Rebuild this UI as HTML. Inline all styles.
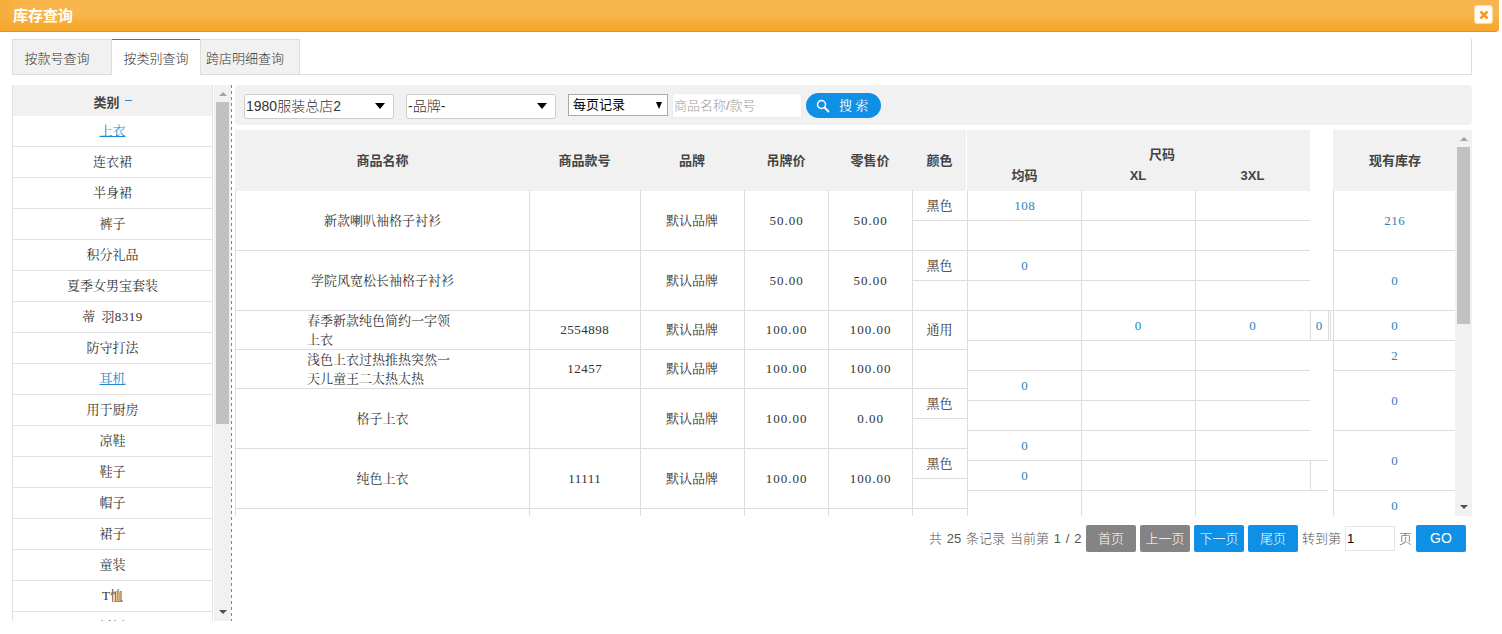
<!DOCTYPE html>
<html lang="zh-CN">
<head>
<meta charset="utf-8">
<title>库存查询</title>
<style>
*{box-sizing:border-box;margin:0;padding:0}
html,body{width:1502px;height:634px;overflow:hidden;background:#fff}
body{position:relative;font-family:"Liberation Sans","Noto Sans CJK SC",sans-serif;font-size:13px;color:#333}
.abs{position:absolute}
/* title bar */
#bar{position:absolute;left:0;top:0;width:1499px;height:32px;background:linear-gradient(#f7b54c 0%,#f7b54b 52%,#f6ad38 72%,#f6a62b 100%);border-bottom:1px solid #e3961f;border-radius:0 0 4px 0;overflow:hidden}
#bar .gloss{position:absolute;left:0;top:0;width:26px;height:31px;background:linear-gradient(to right,rgba(246,166,43,.55),rgba(246,166,43,0))}
#title{position:absolute;left:13px;top:6px;font-size:15px;line-height:20px;font-weight:bold;color:#fff;letter-spacing:0}
#close{position:absolute;left:1474px;top:5px;width:19px;height:19px;border-radius:3px;background:#fefbf6;border:1px solid #f9d9a4}
#close svg{position:absolute;left:3.5px;top:4px}
/* tabs */
#tabs{position:absolute;left:12px;top:39px;width:1460px;height:36px;border-right:1px solid #ddd;border-bottom:1px solid #ddd}
.tab{position:absolute;top:0;height:36px;background:#f1f1f1;border:1px solid #ddd;font-weight:300;font-size:13px;line-height:37px;text-align:center;color:#333;font-family:"Liberation Sans","Noto Sans CJK SC",sans-serif}
.tab.on{background:#fff;border-top:1px solid #337ab7;border-bottom:0;height:37px;line-height:37px;border-left:0;border-right:0}
/* left list */
#left{position:absolute;left:12px;top:85px;width:201px;height:536px;overflow:hidden;border-left:1px solid #e2e2e2;border-right:1px solid #e2e2e2}
#left .h{height:31px;background:#f1f1f1;text-align:center;line-height:36px;font-weight:bold;font-size:13px;color:#444;margin:0 -1px}
#left .h span{display:inline-block;width:7px;height:1px;background:#2a8dd4;margin-left:5px;position:relative;top:-6px}
#left .r{height:31px;border-bottom:1px solid #e2e2e2;text-align:center;line-height:29px;font-family:"Liberation Serif","Noto Serif CJK SC",serif;font-size:13px;color:#333}
#left .r a{color:#1e88d2;text-decoration:underline}
/* scrollbars */
.sb{position:absolute;background:#f1f1f1}
.sb .th{position:absolute;background:#c1c1c1}
.sb .up,.sb .dn{position:absolute;left:50%;width:0;height:0;border-left:4px solid transparent;border-right:4px solid transparent;margin-left:-4px}
.sb .up{border-bottom:4px solid #a3a3a3}
.sb .dn{border-top:4px solid #505050}
#dash{position:absolute;left:231px;top:85px;width:1px;height:536px;background:repeating-linear-gradient(to bottom,#858585 0,#858585 3px,transparent 3px,transparent 6px)}
/* filter */
#filter{position:absolute;left:235px;top:85px;width:1237px;height:40px;background:#f1f1f1;border-radius:4px}
.sel{position:absolute;font-weight:300;background:#fff;border:1px solid #ccc;border-radius:3px;font-size:14px;line-height:22px;color:#333;white-space:nowrap}
.sel i{position:absolute;right:8px;top:8px;width:0;height:0;border-left:5px solid transparent;border-right:5px solid transparent;border-top:6px solid #000}
/* table */
.hd{position:absolute;background:#f1f1f1}
.ht{position:absolute;font-weight:bold;font-size:13px;color:#444;text-align:center;line-height:16px;white-space:nowrap}
.vl{position:absolute;width:1px;background:#ddd}
.hl{position:absolute;height:1px;background:#ddd}
.n{letter-spacing:1px;padding-left:1px}
.k{letter-spacing:.5px;padding-left:.5px}
.c{position:absolute;margin-top:1px;text-align:center;font-family:"Liberation Serif","Noto Serif CJK SC",serif;font-size:13px;line-height:20px;color:#333;white-space:nowrap}
.b{color:#2f7fc0}
/* pager */
#pg{font-weight:300;position:absolute;top:525px;left:0;height:27px;font-size:13px;line-height:27px;color:#555}
.btn{font-weight:300;position:absolute;top:525px;height:27px;width:50px;border-radius:2px;color:#fff;text-align:center;font-size:13px;line-height:27px;background:#0e90e6}
.btn.g{background:#848484}
</style>
</head>
<body>
<div id="bar"><div class="gloss"></div><div id="title">库存查询</div></div>
<div id="close"><svg width="10" height="10" viewBox="0 0 10 10"><path d="M1.5 1.5L8.5 8.5M8.5 1.5L1.5 8.5" stroke="#f39a1f" stroke-width="2.6" stroke-linecap="butt"/></svg></div>

<div id="tabs">
  <div class="tab" style="left:0;width:100px;padding-right:10px">按款号查询</div>
  <div class="tab on" style="left:100px;width:88px">按类别查询</div>
  <div class="tab" style="left:188px;width:100px;padding-right:10px">跨店明细查询</div>
</div>

<div id="left">
  <div class="h">类别<span></span></div>
  <div class="r"><a>上衣</a></div>
  <div class="r">连衣裙</div>
  <div class="r">半身裙</div>
  <div class="r">裤子</div>
  <div class="r">积分礼品</div>
  <div class="r">夏季女男宝套装</div>
  <div class="r" style="word-spacing:3px">蒂 羽<span class="k" style="padding:0">8319</span></div>
  <div class="r">防守打法</div>
  <div class="r"><a>耳机</a></div>
  <div class="r">用于厨房</div>
  <div class="r">凉鞋</div>
  <div class="r">鞋子</div>
  <div class="r">帽子</div>
  <div class="r">裙子</div>
  <div class="r">童装</div>
  <div class="r">T恤</div>
  <div class="r">衬衫</div>
</div>
<div class="sb" style="left:214px;top:85px;width:17px;height:536px">
  <div class="up" style="top:7px"></div>
  <div class="th" style="left:2px;top:17px;width:13px;height:322px"></div>
  <div class="dn" style="bottom:7px"></div>
</div>
<div id="dash"></div>

<div id="filter">
  <div class="sel" style="left:9px;top:9px;width:150px;height:25px;padding-left:1px">1980服装总店2<i></i></div>
  <div class="sel" style="left:171px;top:9px;width:150px;height:25px;padding-left:1px">-品牌-<i></i></div>
  <div class="sel" style="left:333px;top:9px;width:100px;height:22px;border-radius:0;border-color:#a9a9a9;line-height:20px;font-size:13px;font-weight:400;color:#000;padding-left:4px">每页记录<i style="right:5px;top:7px;border-left-width:3.5px;border-right-width:3.5px;border-top-width:7px"></i></div>
  <div class="sel" style="left:437px;top:8px;width:130px;height:25px;border-color:#ececec;border-radius:2px;color:#9d9d9d;font-size:13px;padding-left:1px;line-height:23px">商品名称/款号</div>
  <div class="abs" style="left:571px;top:8px;width:75px;height:25px;border-radius:13px;background:#0e90e6;color:#fff;font-size:13px;line-height:25px;padding-left:33px;white-space:nowrap;font-family:'Liberation Serif','Noto Serif CJK SC',serif">搜 索
    <svg class="abs" style="left:10px;top:6px" width="14" height="14" viewBox="0 0 14 14"><circle cx="5.5" cy="5.5" r="4" fill="none" stroke="#fff" stroke-width="1.4"/><path d="M8.5 8.5L12.5 12.5" stroke="#fff" stroke-width="1.8" stroke-linecap="round"/></svg>
  </div>
</div>

<!--GRID--><div id="grid" style="position:absolute;left:0;top:0;width:1502px;height:516px;overflow:hidden">
<div class="hd" style="left:235px;top:130px;width:731px;height:61px"></div>
<div class="hd" style="left:967px;top:130px;width:343px;height:61px"></div>
<div class="hd" style="left:1333px;top:130px;width:123px;height:61px"></div>
<div class="ht" style="left:236px;top:153px;width:293px">商品名称</div>
<div class="ht" style="left:529px;top:153px;width:111px">商品款号</div>
<div class="ht" style="left:640px;top:153px;width:104px">品牌</div>
<div class="ht" style="left:744px;top:153px;width:84px">吊牌价</div>
<div class="ht" style="left:828px;top:153px;width:84px">零售价</div>
<div class="ht" style="left:912px;top:153px;width:55px">颜色</div>
<div class="ht" style="left:1062px;top:147px;width:200px">尺码</div>
<div class="ht" style="left:968px;top:168px;width:113px">均码</div>
<div class="ht" style="left:1081px;top:168px;width:114px">XL</div>
<div class="ht" style="left:1195px;top:168px;width:115px">3XL</div>
<div class="ht" style="left:1334px;top:153px;width:122px">现有库存</div>
<div class="vl" style="left:235px;top:190px;height:326px"></div>
<div class="vl" style="left:529px;top:190px;height:326px"></div>
<div class="vl" style="left:640px;top:190px;height:326px"></div>
<div class="vl" style="left:744px;top:190px;height:326px"></div>
<div class="vl" style="left:828px;top:190px;height:326px"></div>
<div class="vl" style="left:912px;top:190px;height:326px"></div>
<div class="hl" style="left:235px;top:250px;width:677px"></div>
<div class="hl" style="left:235px;top:310px;width:677px"></div>
<div class="hl" style="left:235px;top:349px;width:677px"></div>
<div class="hl" style="left:235px;top:388px;width:677px"></div>
<div class="hl" style="left:235px;top:448px;width:677px"></div>
<div class="hl" style="left:235px;top:508px;width:677px"></div>
<div class="hl" style="left:912px;top:220px;width:55px"></div>
<div class="hl" style="left:912px;top:250px;width:55px"></div>
<div class="hl" style="left:912px;top:280px;width:55px"></div>
<div class="hl" style="left:912px;top:310px;width:55px"></div>
<div class="hl" style="left:912px;top:349px;width:55px"></div>
<div class="hl" style="left:912px;top:388px;width:55px"></div>
<div class="hl" style="left:912px;top:418px;width:55px"></div>
<div class="hl" style="left:912px;top:448px;width:55px"></div>
<div class="hl" style="left:912px;top:478px;width:55px"></div>
<div class="hl" style="left:912px;top:508px;width:55px"></div>
<div class="vl" style="left:967px;top:190px;height:326px"></div>
<div class="vl" style="left:1081px;top:190px;height:326px"></div>
<div class="vl" style="left:1195px;top:190px;height:326px"></div>
<div class="hl" style="left:968px;top:220px;width:342px"></div>
<div class="hl" style="left:968px;top:250px;width:342px"></div>
<div class="hl" style="left:968px;top:280px;width:342px"></div>
<div class="hl" style="left:968px;top:310px;width:366px"></div>
<div class="hl" style="left:968px;top:340px;width:366px"></div>
<div class="hl" style="left:968px;top:370px;width:342px"></div>
<div class="hl" style="left:968px;top:400px;width:342px"></div>
<div class="hl" style="left:968px;top:430px;width:342px"></div>
<div class="hl" style="left:968px;top:460px;width:360px"></div>
<div class="hl" style="left:968px;top:490px;width:360px"></div>
<div class="vl" style="left:1310px;top:310px;height:30px"></div>
<div class="vl" style="left:1328px;top:310px;height:30px"></div>
<div class="vl" style="left:1330px;top:310px;height:30px"></div>
<div class="vl" style="left:1310px;top:460px;height:30px"></div>
<div class="vl" style="left:1333px;top:190px;height:326px"></div>
<div class="vl" style="left:1455px;top:190px;height:326px"></div>
<div class="hl" style="left:1334px;top:250px;width:121px"></div>
<div class="hl" style="left:1334px;top:310px;width:121px"></div>
<div class="hl" style="left:1334px;top:340px;width:121px"></div>
<div class="hl" style="left:1334px;top:370px;width:121px"></div>
<div class="hl" style="left:1334px;top:430px;width:121px"></div>
<div class="hl" style="left:1334px;top:490px;width:121px"></div>
<div class="c" style="left:236px;top:210px;width:293px">新款喇叭袖格子衬衫</div>
<div class="c" style="left:640px;top:210px;width:104px">默认品牌</div>
<div class="c n" style="left:744px;top:210px;width:84px">50.00</div>
<div class="c n" style="left:828px;top:210px;width:84px">50.00</div>
<div class="c" style="left:236px;top:270px;width:293px">学院风宽松长袖格子衬衫</div>
<div class="c" style="left:640px;top:270px;width:104px">默认品牌</div>
<div class="c n" style="left:744px;top:270px;width:84px">50.00</div>
<div class="c n" style="left:828px;top:270px;width:84px">50.00</div>
<div class="c k" style="left:529px;top:319px;width:111px">2554898</div>
<div class="c" style="left:640px;top:319px;width:104px">默认品牌</div>
<div class="c n" style="left:744px;top:319px;width:84px">100.00</div>
<div class="c n" style="left:828px;top:319px;width:84px">100.00</div>
<div class="c k" style="left:529px;top:358px;width:111px">12457</div>
<div class="c" style="left:640px;top:358px;width:104px">默认品牌</div>
<div class="c n" style="left:744px;top:358px;width:84px">100.00</div>
<div class="c n" style="left:828px;top:358px;width:84px">100.00</div>
<div class="c" style="left:236px;top:408px;width:293px">格子上衣</div>
<div class="c" style="left:640px;top:408px;width:104px">默认品牌</div>
<div class="c n" style="left:744px;top:408px;width:84px">100.00</div>
<div class="c n" style="left:828px;top:408px;width:84px">0.00</div>
<div class="c" style="left:236px;top:468px;width:293px">纯色上衣</div>
<div class="c k" style="left:529px;top:468px;width:111px">11111</div>
<div class="c" style="left:640px;top:468px;width:104px">默认品牌</div>
<div class="c n" style="left:744px;top:468px;width:84px">100.00</div>
<div class="c n" style="left:828px;top:468px;width:84px">100.00</div>
<div class="c" style="left:307px;top:310px;width:150px;text-align:left;white-space:normal;line-height:19px">春季新款纯色简约一字领上衣</div>
<div class="c" style="left:307px;top:349px;width:150px;text-align:left;white-space:normal;line-height:19px">浅色上衣过热推热突然一天儿童王二太热太热</div>
<div class="c" style="left:912px;top:195px;width:55px">黑色</div>
<div class="c" style="left:912px;top:255px;width:55px">黑色</div>
<div class="c" style="left:912px;top:319px;width:55px">通用</div>
<div class="c" style="left:912px;top:393px;width:55px">黑色</div>
<div class="c" style="left:912px;top:453px;width:55px">黑色</div>
<div class="c b k" style="left:968px;top:195px;width:113px">108</div>
<div class="c b k" style="left:968px;top:255px;width:113px">0</div>
<div class="c b k" style="left:1081px;top:315px;width:114px">0</div>
<div class="c b k" style="left:1195px;top:315px;width:115px">0</div>
<div class="c b k" style="left:1310px;top:315px;width:18px">0</div>
<div class="c b k" style="left:968px;top:375px;width:113px">0</div>
<div class="c b k" style="left:968px;top:435px;width:113px">0</div>
<div class="c b k" style="left:968px;top:465px;width:113px">0</div>
<div class="c b k" style="left:1334px;top:210px;width:121px">216</div>
<div class="c b k" style="left:1334px;top:270px;width:121px">0</div>
<div class="c b k" style="left:1334px;top:315px;width:121px">0</div>
<div class="c b k" style="left:1334px;top:345px;width:121px">2</div>
<div class="c b k" style="left:1334px;top:390px;width:121px">0</div>
<div class="c b k" style="left:1334px;top:450px;width:121px">0</div>
<div class="c b k" style="left:1334px;top:495px;width:121px">0</div>
</div>
<div class="sb" style="left:1455px;top:130px;width:17px;height:386px">
  <div class="up" style="top:7px"></div>
  <div class="th" style="left:2px;top:17px;width:13px;height:177px"></div>
  <div class="dn" style="bottom:7px"></div>
</div><!--/GRID-->

<div id="pg">
  <span id="pgt" class="abs" style="left:929px;white-space:nowrap;word-spacing:1.2px">共 25 条记录 当前第 1 / 2</span>
  <span class="abs" style="left:1302px;white-space:nowrap">转到第</span>
  <span class="abs" style="left:1399px;white-space:nowrap">页</span>
</div>
<div class="btn g" style="left:1086px">首页</div>
<div class="btn g" style="left:1140px">上一页</div>
<div class="btn" style="left:1194px">下一页</div>
<div class="btn" style="left:1248px">尾页</div>
<div class="abs" style="left:1345px;top:526px;width:50px;height:25px;border:1px solid #e4e4e4;background:#fff;font-size:13px;line-height:23px;padding-left:1px;color:#000">1</div>
<div class="btn" style="left:1416px;font-size:14px">GO</div>
</body>
</html>
